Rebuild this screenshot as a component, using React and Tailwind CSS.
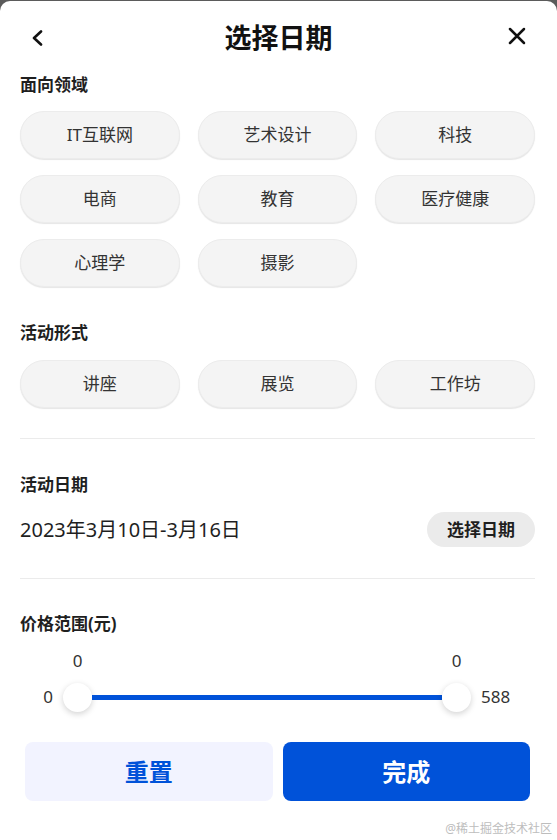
const domains = ['IT互联网', '艺术设计', '科技', '电商', '教育', '医疗健康', '心理学', '摄影'];
const forms = ['讲座', '展览', '工作坊'];

function Chip({ label }) {
	return (
		<button className="h-[48px] rounded-full bg-[#f4f4f4] border border-[#ececec] shadow-[0_1px_1px_rgba(0,0,0,0.1)] text-[17px] text-[#333]">
			{label}
		</button>
	);
}

function Heading({ children, className = '' }) {
	return <h3 className={`h-6 leading-6 text-[17px] font-bold text-[#1f1f1f] ${className}`}>{children}</h3>;
}

function Thumb() {
	return <div className="w-[29px] h-[29px] shrink-0 rounded-full bg-white shadow-[0_2px_6px_rgba(0,0,0,0.18)]" />;
}

export default function App() {
	return (
		<div className="min-h-[840px] bg-[#5b5b5b] pt-px font-['Noto_Sans','Noto_Sans_CJK_SC',sans-serif]">
			<div className="min-h-[839px] bg-white rounded-t-[10px]">
				{/* header */}
				<div className="h-[72px] grid grid-cols-[1fr_auto_1fr] items-center">
					<div className="pl-[30px] pt-[2px]">
						<svg width="14" height="16" viewBox="0 0 14 16" fill="none">
							<path d="M11 1.5 4 8l7 6.5" stroke="#111" strokeWidth="2.6" strokeLinecap="round" strokeLinejoin="round" />
						</svg>
					</div>
					<h1 className="text-[27px] font-bold text-[#111] leading-8 pt-[2px]">选择日期</h1>
					<div className="flex justify-end pr-[30px] pb-[2px]">
						<svg width="20" height="20" viewBox="0 0 20 20" fill="none">
							<path d="M3 3l14 14M17 3 3 17" stroke="#111" strokeWidth="2.5" strokeLinecap="round" />
						</svg>
					</div>
				</div>

				<div className="pl-5 pr-[22px]">
					<Heading>面向领域</Heading>
					<div className="mt-[14px] grid grid-cols-3 gap-x-[18px] gap-y-4">
						{domains.map((d) => (
							<Chip key={d} label={d} />
						))}
					</div>

					<Heading className="mt-[34px]">活动形式</Heading>
					<div className="mt-[15px] grid grid-cols-3 gap-x-[18px]">
						{forms.map((f) => (
							<Chip key={f} label={f} />
						))}
					</div>

					<div className="mt-[30px] h-px bg-[#ebebeb]" />

					<Heading className="mt-[34px]">活动日期</Heading>
					<div className="mt-[15px] flex items-center justify-between h-[35px]">
						<span className="text-[20px] text-[#1f1f1f]">2023年3月10日-3月16日</span>
						<button className="h-[35px] w-[108px] rounded-full bg-[#ebebeb] text-[17px] font-bold text-[#1f1f1f]">
							选择日期
						</button>
					</div>

					<div className="mt-[31px] h-px bg-[#ebebeb]" />

					<Heading className="mt-[33px]">价格范围(元)</Heading>

					<div className="mt-[15px] flex gap-[10px] h-5 leading-5 text-[17px] text-[#333]">
						<div className="w-[33px]" />
						<div className="w-[408px] flex justify-between">
							<span className="w-[29px] text-center">0</span>
							<span className="w-[29px] text-center">0</span>
						</div>
					</div>

					<div className="mt-[11px] flex items-center gap-[10px] h-[30px] text-[17px] text-[#333]">
						<span className="w-[33px] text-right">0</span>
						<div className="w-[408px] flex items-center">
							<Thumb />
							<div className="flex-1 h-[5px] bg-[#0052d9]" />
							<Thumb />
						</div>
						<span>588</span>
					</div>

					<div className="mt-[30px] px-[5px] grid grid-cols-2 gap-[10px]">
						<button className="h-[59px] rounded-lg bg-[#f2f3ff] text-[24px] font-bold text-[#0052d9]">重置</button>
						<button className="h-[59px] rounded-lg bg-[#0052d9] text-[24px] font-bold text-white">完成</button>
					</div>
				</div>

				<div className="mt-5 pr-[5px] text-right text-[12px] leading-4 text-[#bdbdbd]">@稀土掘金技术社区</div>
			</div>
		</div>
	);
}
